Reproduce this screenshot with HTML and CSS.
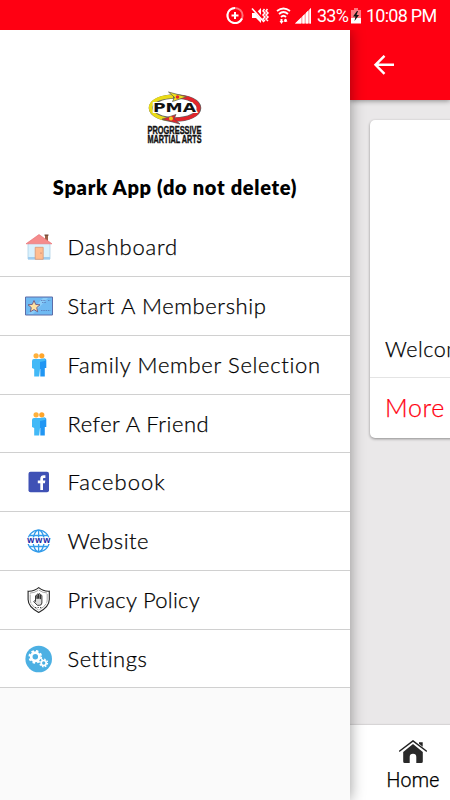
FILE: index.html
```html
<!DOCTYPE html>
<html lang="en">
<head>
<meta charset="utf-8">
<title>Spark App</title>
<link rel="stylesheet" href="styles.css">
</head>
<body>
<div class="phone">
  <header class="status">
    <svg class="status-icons" width="90" height="20" viewBox="0 0 90 20" fill="none" stroke="#fff">
      <circle cx="9" cy="9.500" r="7.600" stroke="#ff7078" stroke-width="2"/>
      <path d="M9 1.900A7.600 7.600 0 1 0 16 12.500M9 6v7M5.500 9.500h7" stroke-width="2"/>
      <path d="M26 7h4l5-5v15l-5-5h-4z" fill="#fff" stroke="none"/>
      <path d="M27 2l12 14" stroke="#ff0012" stroke-width="3"/>
      <path d="M26 2.500l12 13.500" stroke-width="1.500"/>
      <path d="M38.500 3l-1.500 2 2 2-2 2 2 2-2 2 2 2M41.500 3l-1.500 2 2 2-2 2 2 2-2 2 2 2" stroke-width="1.500"/>
      <path d="M51 5q6.500-5 13 0M53 8q4.500-4 9 0M55 11q2.500-2.500 5 0" stroke-width="1.800"/>
      <path d="M55.500 13v3M59.500 13v3" stroke-width="2"/>
      <path d="M53.500 15h4l-2 3zM57.500 15.500h4l-2-3z" fill="#fff" stroke="none"/>
      <path d="M69 17.500l16-15.500v15.500z" fill="#ffb0b5" stroke="none"/>
      <path d="M69 17.500l6-5.800v5.800zM76.500 10.300l2-2v9.200h-2zM80 6.800l2-2v12.700h-2zM83.500 3.500L85 2v15.500h-1.500z" fill="#fff" stroke="none"/>
    </svg>
    <span class="battery-text">33%</span>
    <svg class="battery" width="10" height="16" viewBox="0 0 10 16">
      <path d="M3 0h4v2h3v9H0V2h3z" fill="#ff7880"/><path d="M0 10h10v5.500H0z" fill="#fff"/>
      <path d="M6 3L2 8.500h2.500L3.500 13 8 7H5.500L7 3z" fill="#111"/>
    </svg>
    <span class="clock">10:08 PM</span>
  </header>

  <div class="screen">
    <main class="page">
      <div class="topbar">
        <svg width="22" height="20" viewBox="0 0 22 20" fill="none" stroke="#fff" stroke-width="2.400"><path d="M21 9.700H2.500M11.500.8l-9 9 9 9"/></svg>
      </div>
      <div class="content">
        <article class="card">
          <p class="card-title">Welcome</p>
          <p class="card-more">More Info</p>
        </article>
      </div>
      <nav class="tabbar">
        <svg width="28" height="24" viewBox="0 0 28 24">
          <path d="M4.200 12L14 4l9.800 8v9.500a1.500 1.500 0 0 1-1.500 1.500h-5v-6a3.300 3.300 0 0 0-6.600 0v6h-5a1.500 1.500 0 0 1-1.500-1.500z" fill="#292929"/>
          <path d="M.7 11L14 .9 27.300 11" fill="none" stroke="#222" stroke-width="1.500" stroke-linecap="round"/>
          <path d="M20 3.800V2.200h3.700v4.600z" fill="#222"/>
        </svg>
        <span>Home</span>
      </nav>
    </main>

    <aside class="drawer">
      <div class="profile">
        <svg class="logo" width="58" height="54" viewBox="0 0 58 54">
          <ellipse cx="29" cy="17" rx="24" ry="11.500" fill="none" stroke="#666" stroke-width="4.600"/>
          <path d="M28 28.500C-2 28.500-4 6 27 5.500" fill="none" stroke="#eadb18" stroke-width="3.600"/>
          <path d="M29 5.500C61 6 60 28.500 29 28.500" fill="none" stroke="#e2242b" stroke-width="3.600"/>
          <path d="M22.500 1l18 4.800-14 4.700 2-4.200z" fill="#f0df19" stroke="#555" stroke-width=".7"/>
          <path d="M34 33l-18-4.800 14-4.700-2 4.200z" fill="#e2242b" stroke="#555" stroke-width=".7"/>
          <circle cx="31.500" cy="6" r="1.800" fill="#e2242b"/><circle cx="25" cy="27.500" r="2" fill="#f2c71b"/>
          <text x="7" y="21" class="logo-mark" textLength="43" lengthAdjust="spacingAndGlyphs">PMA</text>
          <text x="1.500" y="42.800" class="logo-name" textLength="54" lengthAdjust="spacingAndGlyphs">PROGRESSIVE</text>
          <text x="1.500" y="52" class="logo-name" textLength="54" lengthAdjust="spacingAndGlyphs">MARTIAL ARTS</text>
        </svg>
        <h1>Spark App (do not delete)</h1>
      </div>
      <ul class="menu">
        <li class="dashboard">
          <svg width="28" height="28" viewBox="0 0 28 28">
            <path d="M3 11L14 2l11 9v15H3z" fill="#d9f1fd" stroke="#a7cbe2" stroke-width=".7"/>
            <path d="M3 24h22v2.500H3z" fill="#9fcdf0"/><path d="M20 2h3v8l-3-3z" fill="#9b6246"/><path d="M19.500 1.500h4v1.200h-4z" fill="#6f4636"/>
            <path d="M14 1.500L1 10.800h26z" fill="#f58c8c" stroke="#e96c70" stroke-width=".6"/>
            <path d="M10.200 14.300h8v12h-8z" fill="#ffbd90" stroke="#d99673" stroke-width=".8"/><circle cx="16" cy="20" r=".6" fill="#a66"/>
          </svg>
          <span>Dashboard</span>
        </li>
        <li class="membership">
          <svg width="28" height="28" viewBox="0 0 28 28">
            <path d="M.5 5h27v18H.5z" fill="#70baf2" stroke="#5d6da8"/>
            <path d="M3 22L18 6h5L8 22z" fill="#8bcdf9"/>
            <path d="M9 8.500l1.700 3.900 4.300.4-3.300 2.800 1 4.200L9 17.600l-3.700 2.200 1-4.200L3 12.800l4.300-.4z" fill="#ffe2a1" stroke="#71577f" stroke-width=".9"/>
            <path d="M16 8.500h5M23 8.500h2.500M17 10.500h4M16 18.500h9.500" stroke="#536eae" stroke-width="1" stroke-dasharray="1.500 .8" opacity=".7"/>
          </svg>
          <span>Start A Membership</span>
        </li>
        <li class="family">
          <svg width="28" height="28" viewBox="0 0 28 28"><use href="#friends"/></svg>
          <span>Family Member Selection</span>
        </li>
        <li class="refer">
          <svg width="28" height="28" viewBox="0 0 28 28">
            <g id="friends">
              <circle cx="11.100" cy="4.800" r="2.600" fill="#ffb13c"/><circle cx="16.800" cy="4.800" r="2.600" fill="#ffa52a"/>
              <path d="M14 8h6.500a1.500 1.500 0 0 1 .8 1.500V17h-1.500v8.500h-4.500V18H14z" fill="#2196f3"/>
              <path d="M9 8h6l4.600-.8a1.500 1.500 0 0 1 0 2.900l-4.600.9v7l-.8 7.500H9.200V18L7 17V10A2 2 0 0 1 9 8z" fill="#42b9f7"/>
            </g>
          </svg>
          <span>Refer A Friend</span>
        </li>
        <li class="facebook">
          <svg width="28" height="28" viewBox="0 0 28 28">
            <rect x="3.500" y="3.800" width="20.500" height="20.500" rx="2" fill="#3f51b5"/>
            <path d="M15.300 22v-6.800h-2.500v-2.800h2.500v-1.700c0-2.500 1.400-3.500 3.400-3.500h1.700v2.700H19c-.8 0-1 .4-1 1.100v1.400h2.300l-.4 2.800H18V22z" fill="#fff"/>
          </svg>
          <span>Facebook</span>
        </li>
        <li class="website">
          <svg width="28" height="28" viewBox="0 0 28 28">
            <g fill="none" stroke="#329bea" stroke-width="1.300"><circle cx="13.600" cy="14" r="10.800"/><ellipse cx="13.600" cy="14" rx="5.500" ry="10.800"/><path d="M13.600 3v22M5 8.500h17.500M5 19.500h17.500"/></g>
            <path d="M1 10.400h26v6.600H1z" fill="#fff"/>
            <text x="2.200" y="16.300" class="www" textLength="23">www</text>
          </svg>
          <span>Website</span>
        </li>
        <li class="privacy">
          <svg width="28" height="28" viewBox="0 0 28 28" fill="none" stroke="#252525">
            <path d="M13.700 1.700q4.500 3.800 10.600 3.500v8.300c0 6-5 10-10.600 13-5.600-3-10.600-7-10.600-13V5.200q6.100.3 10.600-3.500z" stroke-width="1.100"/>
            <path d="M13.700 4q4 3 8.500 3v6.500c0 5-3.500 7.500-8.500 10.500-5-3-8.500-5.500-8.500-10.500V7q4.500 0 8.500-3z" stroke-width=".4" stroke-dasharray="9 1"/>
            <path d="M10.500 15.500V9.800q.9-1 1.600 0v3V8.300q.9-1 1.600 0v4.300V8.100q.9-1 1.600 0v5V9.500q.9-1 1.600 0V17q-.3 2.300-2.300 2.300h-2.300l-3.600-3.800q.5-1.300 1.800 0z" stroke-width=".9" fill="#ddd"/>
            <path d="M10.200 21.500h7" stroke-width="1" stroke-dasharray="1 1.500"/>
          </svg>
          <span>Privacy Policy</span>
        </li>
        <li class="settings">
          <svg width="28" height="28" viewBox="0 0 28 28">
            <circle cx="13.700" cy="14" r="13.300" fill="#4cb0e3"/>
            <g fill="none" stroke="#fff">
              <circle cx="10.300" cy="11.800" r="4.100" stroke-width="2.700"/><circle cx="10.300" cy="11.800" r="5.900" stroke-width="1.900" stroke-dasharray="2.500 2.130"/>
              <circle cx="18.700" cy="18" r="2.500" stroke-width="1.700"/><circle cx="18.700" cy="18" r="3.800" stroke-width="1.300" stroke-dasharray="1.600 1.380"/>
            </g>
          </svg>
          <span>Settings</span>
        </li>
      </ul>
    </aside>
  </div>
</div>
</body>
</html>
```

FILE: styles.css
```css
* { box-sizing: border-box; }
body { margin: 0; font-family: Lato, "Liberation Sans", sans-serif; color: #000; }
h1, p, ul { margin: 0; padding: 0; }
.phone { width: 450px; height: 800px; overflow: hidden; display: flex; flex-direction: column; }

.status { height: 30px; flex: none; background: #ff0012; color: #fff; display: flex; align-items: center; padding: 2px 0 0 226px; font: 18px/28px Roboto, sans-serif; white-space: nowrap; }
.status-icons { flex: none; }
.battery-text { width: 34px; margin-left: 1px; letter-spacing: -.8px; }
.battery { margin-right: 5px; flex: none; }
.clock { letter-spacing: -.75px; }

.screen { flex: 1; display: grid; grid-template-columns: 350px 100px; min-height: 0; }
.drawer { grid-column: 1; grid-row: 1; background: #fafafa; box-shadow: 0 0 14px rgba(0, 0, 0, .4); z-index: 2; clip-path: inset(0 -20px 0 0); }
.page { grid-column: 2; grid-row: 1; display: flex; flex-direction: column; min-height: 0; overflow: hidden; background: #eae8e9; }

.topbar { height: 70px; flex: none; background: #ff0012; padding: 25px 0 0 23px; box-shadow: 0 1px 5px rgba(0, 0, 0, .4); z-index: 1; }
.topbar svg { display: block; }
.content { flex: 1; padding: 20px 0 0 20px; }
.card { width: 400px; height: 318px; background: #fff; border-radius: 5px; box-shadow: 0 1px 3px rgba(0, 0, 0, .4); display: flex; flex-direction: column; justify-content: flex-end; }
.card-title { padding: 0 15px; height: 44px; font-size: 21.5px; line-height: 30px; border-bottom: 1px solid #e4e4e4; letter-spacing: .5px; }
.card-more { padding: 0 15px; height: 60px; font-size: 25px; line-height: 59px; color: #ff0010; letter-spacing: .6px; }
.tabbar { height: 75px; flex: none; background: #fff; padding: 15px 0 0 26px; width: 100px; display: flex; flex-direction: column; align-items: center; box-shadow: 0 -1px 1px rgba(0, 0, 0, .08); }
.tabbar svg { flex: none; }
.tabbar span { font: 300 19.500px/26px Roboto, sans-serif; margin-top: 4px; letter-spacing: .2px; -webkit-text-stroke: .25px #000; }

.profile { height: 188.400px; background: #fff; display: flex; flex-direction: column; align-items: center; padding-top: 61px; }
.logo { flex: none; }
.logo-mark { font: bold 11.500px "DejaVu Sans", sans-serif; fill: #111; stroke: #fff; stroke-width: 2px; paint-order: stroke; }
.logo-name { font: bold 11px "Liberation Sans", sans-serif; fill: #111; stroke: #111; stroke-width: .4px; }
h1 { margin-top: 29px; font-size: 20px; line-height: 26px; font-weight: 800; letter-spacing: .7px; white-space: nowrap; }

.menu { list-style: none; background: #fff; }
.menu li { height: 58.75px; display: flex; align-items: center; gap: 14.500px; padding-left: 25px; border-bottom: 1px solid #d0d0d0; }
.menu svg { flex: none; }
.menu span { font-size: 22px; line-height: 28px; letter-spacing: .5px; white-space: nowrap; }
.menu .dashboard span { letter-spacing: .85px; }
.menu .membership span { letter-spacing: .6px; }
.menu .family span { letter-spacing: .68px; }
.menu .facebook span { letter-spacing: 1px; }
.menu .privacy span { letter-spacing: .25px; }
.www { font: bold 9px "Liberation Sans", sans-serif; fill: #1727a5; }
.menu span, .card-title, .card-more { font-weight: 300; -webkit-text-stroke: .25px currentColor; }
```
